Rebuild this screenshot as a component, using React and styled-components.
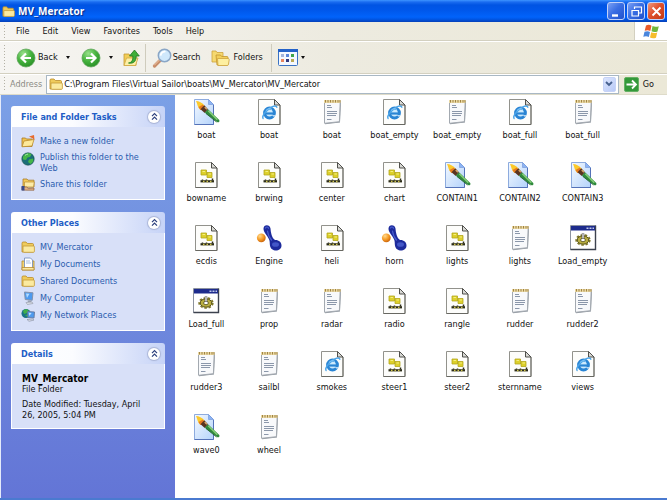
import React from "react";
import styled, { createGlobalStyle, css } from "styled-components";

const uiFont = `"DejaVu Sans Condensed", "DejaVu Sans", sans-serif`;

const GlobalStyle = createGlobalStyle`
  * { box-sizing: border-box; }
  html, body { margin: 0; padding: 0; }
  body {
    font-family: ${uiFont};
    font-size: 9px;
    line-height: 11px;
    color: #111;
    background: #fff;
  }
  button, input { font: inherit; color: inherit; }
`;

const Window = styled.div`
  display: flex;
  flex-direction: column;
  min-height: 100vh;
  border-bottom: 2px solid #4a7ad0;
  background: #fff;
`;

const TitleBar = styled.header`
  display: flex;
  align-items: center;
  gap: 3px;
  height: 22px;
  padding: 0 2px;
  background: linear-gradient(#3d95ff 0, #1a6cf0 2px, #0054e3 5px, #0057ea 10px, #0163fb 17px, #0058e8 19px, #0640b8 22px);
`;

const Title = styled.h1`
  flex: 1;
  margin: 0;
  font-family: "Open Sans", sans-serif;
  font-size: 10px;
  font-weight: 700;
  line-height: 20px;
  color: #fff;
  text-shadow: 1px 1px 1px #0a2a80;
`;

const WindowButtons = styled.div`
  display: flex;
  gap: 2px;
`;

const WindowButton = styled.button`
  width: 18px;
  height: 18px;
  padding: 0;
  border: 1px solid #c3d2f8;
  border-radius: 3px;
  display: grid;
  place-items: center;
  background: ${(p) =>
    p.$close
      ? "linear-gradient(135deg, #ee9a80, #e0502c 45%, #c23a14)"
      : "linear-gradient(135deg, #7ba0f4, #3b6fe4 45%, #1f51cc)"};
`;

const Bar = styled.div`
  display: flex;
  align-items: center;
  background: linear-gradient(90deg, #f6f5f2, #edebe0 50%, #ebe8d7);
`;

const MenuBar = styled(Bar)`
  height: 19px;
  padding-left: 4px;
  border-bottom: 1px solid #d3d0c0;
`;

const ToolBar = styled(Bar)`
  height: 33px;
  padding-left: 4px;
  border-top: 1px solid #fff;
  border-bottom: 1px solid #d3d0c0;
`;

const AddressBar = styled(Bar)`
  height: 21px;
  padding: 0 13px 1px 4px;
  border-top: 1px solid #fff;
  border-bottom: 1px solid #dedbc9;
`;

const Grip = styled.span`
  width: 1px;
  height: ${(p) => p.$height}px;
  background: repeating-linear-gradient(#b3b1a5 0 1px, transparent 1px 3px);
`;

const Menus = styled.nav`
  flex: 1;
  display: flex;
  gap: 13px;
  padding-left: 11px;
`;

const MenuButton = styled.button`
  padding: 0;
  border: 0;
  background: none;
`;

const LogoBox = styled.div`
  display: grid;
  place-items: center;
  width: 33px;
  height: 18px;
  border-left: 1px solid #d3d0c0;
  background: #fff;
`;

const ToolButton = styled.button`
  display: flex;
  align-items: center;
  gap: ${(p) => p.$gap || 3}px;
  margin-left: ${(p) => p.$space || 0}px;
  padding: 0;
  border: 0;
  background: none;
`;

const Caret = styled.span`
  border: 2px solid transparent;
  border-top: 3px solid #111;
  border-bottom: 0;
`;

const Divider = styled.span`
  width: 1px;
  height: 28px;
  margin-left: ${(p) => p.$space}px;
  background: #cfccbd;
`;

const AddressLabel = styled.label`
  margin: 0 4px 0 5px;
  color: #8b8a84;
`;

const AddressField = styled.div`
  flex: 1;
  display: flex;
  align-items: center;
  height: 19px;
  padding: 0 2px;
  border: 1px solid #a9b8c4;
  background: #fff;
`;

const AddressInput = styled.input`
  flex: 1;
  min-width: 0;
  padding: 0 0 0 1px;
  border: 0;
  outline: 0;
  background: none;
`;

const DropButton = styled.button`
  display: grid;
  place-items: center;
  width: 13px;
  height: 15px;
  padding: 0;
  border: 1px solid #c6d3f7;
  border-radius: 2px;
  background: linear-gradient(135deg, #dbe5fe, #b9caf7);
`;

const Content = styled.div`
  flex: 1;
  display: flex;
`;

const Sidebar = styled.aside`
  width: 175px;
  flex: none;
  display: flex;
  flex-direction: column;
  gap: 12px;
  padding: 11px 10px;
  border-left: 1px solid #e4ebfa;
  background: linear-gradient(#7ba0e6, #6375d6);
`;

const Panel = styled.section`
  color: #2a5cae;
`;

const PanelHeader = styled.div`
  display: flex;
  align-items: center;
  justify-content: space-between;
  height: 21px;
  padding: 0 5px 0 10px;
  border-radius: 3px 3px 0 0;
  background: linear-gradient(90deg, #fff 0, #fbfcff 40%, #c6d3f7);
`;

const PanelTitle = styled.h2`
  margin: 0;
  padding-top: 2px;
  font-size: 9px;
  line-height: 13px;
  font-weight: 700;
  color: #215dc6;
`;

const CollapseButton = styled.button`
  display: grid;
  place-items: center;
  width: 12px;
  height: 12px;
  padding: 0;
  border: 0;
  border-radius: 50%;
  background: #fff;
  box-shadow: 0 0 1px 1px #a9b4d6;
`;

const panelBody = css`
  margin: 0;
  border: 1px solid #fff;
  border-top: 0;
  background: #d8e0f8;
`;

const LinkList = styled.ul`
  ${panelBody}
  display: flex;
  flex-direction: column;
  gap: 3px;
  padding: 7px 10px 8px 9px;
  list-style: none;
`;

const PanelLink = styled.a`
  display: flex;
  align-items: center;
  gap: 5px;
  min-height: 14px;
  color: inherit;
  text-decoration: none;
`;

const WrappedLink = styled(PanelLink)`
  align-items: flex-start;
  padding-top: 1px;
`;

const LinkText = styled.span`
  flex: 1;
`;

const DetailsBody = styled.div`
  ${panelBody}
  display: flex;
  flex-direction: column;
  gap: 4px;
  padding: 9px 10px 7px 10px;
  color: #111;
`;

const DetailText = styled.p`
  margin: 0;
`;

const DetailName = styled.strong`
  display: block;
  font-size: 10px;
  color: #000;
`;

const FileGrid = styled.main`
  flex: 1;
  display: grid;
  grid-template-columns: repeat(auto-fill, minmax(62px, 1fr));
  grid-auto-rows: 63px;
  align-content: start;
  padding: 3px 53px 18px 0;
`;

const FileItem = styled.button`
  display: flex;
  flex-direction: column;
  align-items: center;
  gap: 4px;
  padding: 0;
  border: 0;
  background: none;
`;

const Icon = styled.svg`
  display: block;
  flex: none;
`;

/* ---------- file icons (28 x 28) ---------- */

const Page = () => (
  <>
    <path d="M3.500 1.500h16l5.500 5.500v19.500h-21.500z" fill="#fdfdfb" stroke="#92928c" />
    <path d="M25 7v19.500H3.500" fill="none" stroke="#686862" />
    <path d="M19.500 1.500v5.500h5.500z" fill="#d8d8d4" stroke="#50504c" strokeLinejoin="round" />
  </>
);

const PaintIcon = () => (
  <Icon width="28" height="28" viewBox="0 0 28 28">
    <defs>
      <linearGradient id="paintPage" x1="0" y1="0" x2="1" y2="1">
        <stop offset="0" stopColor="#f4f9ff" />
        <stop offset="1" stopColor="#b4d3fb" />
      </linearGradient>
    </defs>
    <path d="M2.500 1.500h14l5 5v20h-19z" fill="url(#paintPage)" stroke="#8dabde" />
    <path d="M2.500 26.500h19V7" fill="none" stroke="#5472b8" />
    <path d="M16.500 1.500v5h5z" fill="#8db4f4" stroke="#6f94d8" strokeWidth=".6" />
    <path d="M4 3c3 0 6 1.500 8.500 4.500l-4 4.500C5.500 9.500 5.500 6 4 3z" fill="#fbc92c" />
    <path d="M6.500 9l2 3 3.800-2.500L11 6.500z" fill="#e67a20" />
    <path d="M12.300 7.300l3.700 4-3.200 3.700-4.300-3.800z" fill="#5a3420" />
    <path d="M12.800 9l2 2.300" stroke="#d8a868" strokeWidth="1.400" />
    <path d="M16 11.300l11 10.500c1.200 1.500-.3 3.200-2 2.200L12.800 14.800z" fill="#2f8a3c" />
    <path d="M16.300 12.800l9 9" stroke="#84cc78" strokeWidth="1.600" />
    <path d="M14 15.500l10.500 8.500" stroke="#1c5a2a" strokeWidth=".8" />
  </Icon>
);

const WebIcon = () => (
  <Icon width="28" height="28" viewBox="0 0 28 28">
    <Page />
    <circle cx="14.500" cy="15" r="4.900" fill="#cdeafd" stroke="#2a85d4" strokeWidth="3" />
    <path d="M10.500 15.500h9" stroke="#2a85d4" strokeWidth="2.200" />
    <path d="M16.500 17.200h4l-1.500 1.600z" fill="#e6f4fe" />
    <path d="M8.500 20.800c-2.500-1.500 1.500-7.500 6.500-10.800 3-2 6.800-3 6.800-.3" fill="none" stroke="#4aa4e8" strokeWidth="1.500" />
    <path d="M10.800 12.700c1.500-2.200 4.500-2.500 6.200-1.200" fill="none" stroke="#8dccf8" strokeWidth="1" />
  </Icon>
);

const TextIcon = () => (
  <Icon width="28" height="28" viewBox="0 0 28 28">
    <path d="M7 4h16l-1 20.500-15 1.800z" fill="#8f969e" />
    <path d="M6.500 3.500h15.700l-.8 20.200-14.900 1.600z" fill="#f8f9fb" stroke="#a3a9b0" />
    <path d="M6 2h16.500v3H6z" fill="#ead9a4" />
    <path d="M7.500 2v2.500M10 2v2.500M12.500 2v2.500M15 2v2.500M17.500 2v2.500M20 2v2.500M22 2v2.500" stroke="#a08344" />
    <path d="M9 7.500h4M9 9.500h5M9 13.500h10M9 15.500h10M9 17.500h9M9 21.500h4.500" stroke="#8b97aa" />
  </Icon>
);

const ImageIcon = () => (
  <Icon width="28" height="28" viewBox="0 0 28 28">
    <Page />
    <path d="M9 9h5.500v5H9zM15 11.500h5v5h-5z" fill="#ddd02a" stroke="#b3a61c" strokeWidth=".8" />
    <path d="M10.500 10.500h2.500M16.500 13h2.500" stroke="#f4ee80" />
    <path d="M8.500 20.300h13.500" stroke="#2c2c18" strokeWidth="2.200" />
    <path d="M10.500 18.500v1M14.500 18.500v1M20.500 17.500v2" stroke="#2c2c18" strokeWidth="1.500" />
    <path d="M11 20.500h1.500M14.500 20.500h1.500M18 20.500h1.500" stroke="#cfc44c" strokeWidth="1.400" />
  </Icon>
);

const SoundIcon = () => (
  <Icon width="28" height="28" viewBox="0 0 28 28">
    <defs>
      <radialGradient id="soundOrange" cx=".35" cy=".3" r=".7">
        <stop offset="0" stopColor="#ffd98c" />
        <stop offset=".6" stopColor="#f59a24" />
        <stop offset="1" stopColor="#cf6a10" />
      </radialGradient>
    </defs>
    <path d="M8.500 4.500c0-4.500 6.500-4.500 7 0 .3 4 1.300 9.500 4.500 11.500 3.500-.3 6.500 2 6.500 5.500 0 6.500-10.500 6.800-11.500.3-.4-2.500 0-4.500-1-6.500C12 11 8.500 8.500 8.500 4.500z" fill="#1d2b9c" />
    <path d="M10.500 4c.8-1.500 2.500-1.200 3 .2M12.500 7c.5 3.500 2 7 4 9" fill="none" stroke="#4a5fd0" strokeWidth="1.200" strokeLinecap="round" />
    <ellipse cx="20.500" cy="20.500" rx="3.500" ry="2.300" fill="#4357c8" />
    <circle cx="6.300" cy="13.800" r="4.400" fill="url(#soundOrange)" />
  </Icon>
);

const ProgramIcon = () => (
  <Icon width="28" height="28" viewBox="0 0 28 28">
    <path d="M1.500 1.500h25v24h-25z" fill="#fff" stroke="#8d93a0" />
    <path d="M26.500 1.500v24h-25" fill="none" stroke="#3c424e" strokeWidth="1.400" />
    <path d="M2 2h24v4.500H2z" fill="#1d2b8c" />
    <path d="M17.500 4.300h2M20.500 4.300h2M23.500 4.300h1.500" stroke="#c0c8ec" strokeWidth="1.600" />
    <ellipse cx="14" cy="16" rx="5.800" ry="4.200" fill="#b9ae40" stroke="#4e4914" />
    <ellipse cx="14" cy="16" rx="6.800" ry="5" fill="none" stroke="#7d7526" strokeWidth="1.700" strokeDasharray="2.400 1.800" />
    <ellipse cx="14" cy="16" rx="2.400" ry="1.700" fill="#fff" stroke="#4e4914" strokeWidth=".8" />
    <path d="M14 9.500v5.500" stroke="#4a4a4a" strokeWidth="2.600" />
    <path d="M14 10v4.500" stroke="#fff" strokeWidth="1.200" />
  </Icon>
);

const fileIcons = {
  paint: PaintIcon,
  web: WebIcon,
  text: TextIcon,
  image: ImageIcon,
  sound: SoundIcon,
  program: ProgramIcon,
};

/* ---------- small icons ---------- */

const FolderIcon = ({ size = 14 }) => (
  <Icon width={size} height={size} viewBox="0 0 14 14">
    <path d="M1 3.200c0-.7.400-1.200 1-1.200h3l1.300 1.500h5.200c.6 0 1 .400 1 1v7.500H1z" fill="#efcb5c" stroke="#b98c2a" strokeWidth=".8" />
    <path d="M2 6h10.500c.6 0 .9.300.9.800v4.600c0 .5-.3.900-.9.900H3c-.6 0-1-.4-1-1z" fill="#fbeaa0" stroke="#c49a38" strokeWidth=".8" />
  </Icon>
);

const NewFolderIcon = () => (
  <Icon width="14" height="14" viewBox="0 0 14 14">
    <path d="M1 4h3.500l1 1H11v7.500H1z" fill="#f0c350" stroke="#a97a22" strokeWidth=".8" />
    <path d="M3 7l10-1.500-2 6.500-10 .8z" fill="#fde99a" stroke="#b98a2c" strokeWidth=".8" />
    <path d="M8 2.500l5-1.500.5 5-2.500-2z" fill="#e86a2c" />
  </Icon>
);

const GlobeIcon = () => (
  <Icon width="14" height="14" viewBox="0 0 14 14">
    <circle cx="7" cy="7" r="6.200" fill="#1b6e78" stroke="#195048" strokeWidth=".6" />
    <path d="M3 3c2-2 6-2.200 7.500-.5L9 5 6.500 5.500 5 8 2 7.500C1.500 6 2 4 3 3zM8 7.500l4-1c.8 2-.3 4.500-2.500 5.500L7 10z" fill="#45b649" />
    <path d="M4 3.500c1-1 2-1.300 3-1.300" stroke="#b4ecb0" fill="none" />
  </Icon>
);

const ShareIcon = () => (
  <Icon width="14" height="14" viewBox="0 0 14 14">
    <path d="M2 2h4l1 1.200h6V10H2z" fill="#f3ca58" stroke="#a97c28" strokeWidth=".8" />
    <path d="M3.500 5h9.800l-.8 5h-9z" fill="#fdeba6" stroke="#b98c30" strokeWidth=".7" />
    <path d="M1 10h4.500l2 1.500 5.500-.5v2.200H6L1 13z" fill="#e3b184" stroke="#7d4f2b" strokeWidth=".6" />
    <path d="M.5 9h3v4.500h-3z" fill="#37498c" />
  </Icon>
);

const DocumentsIcon = () => (
  <Icon width="14" height="14" viewBox="0 0 14 14">
    <path d="M1 4h12v9H1z" fill="#f4d471" stroke="#b08a30" strokeWidth=".8" />
    <path d="M3.500 1h6L11.500 3v8.500h-8z" fill="#fff" stroke="#6c88b8" strokeWidth=".8" />
    <path d="M5 4h4M5 6h5" stroke="#8faede" strokeWidth=".8" />
    <path d="M1 10.500h12V13H1z" fill="#fbe9a2" stroke="#b98c30" strokeWidth=".8" />
  </Icon>
);

const ComputerIcon = () => (
  <Icon width="14" height="14" viewBox="0 0 14 14">
    <path d="M3.500 1l8.500.8-.8 7.500-7-.8z" fill="#4c9af0" stroke="#8493ad" strokeWidth="1" />
    <path d="M5 2.500l3.500.3L6 7z" fill="#b4dcff" />
    <path d="M7 9.500h3l.5 1.500-4 .2z" fill="#9aa3b4" />
    <path d="M5 11.500l6-.5 1 1.500-5.500 1z" fill="#dfe2ea" stroke="#8d93a3" strokeWidth=".6" />
  </Icon>
);

const NetworkIcon = () => (
  <Icon width="14" height="14" viewBox="0 0 14 14">
    <circle cx="5" cy="5.500" r="4.500" fill="#1a7387" />
    <path d="M2 3c1.500-2 4-2 5.500-1L6 5 3 6zM4 7l3-.500L6.500 9z" fill="#42b04a" />
    <path d="M6.500 3.500l7 .500-.5 6-6-.5z" fill="#4e9aee" stroke="#66789c" strokeWidth=".9" />
    <path d="M7.800 4.800l2.800.2-2.300 3z" fill="#c2e2ff" />
    <path d="M6 11.500l5.500-.5 1.500 1-5 1.300z" fill="#e0e3ec" stroke="#7f889c" strokeWidth=".6" />
  </Icon>
);

const ArrowBall = ({ back }) => (
  <Icon width="20" height="20" viewBox="0 0 20 20">
    <defs>
      <radialGradient id={back ? "ballBack" : "ballForward"} cx=".35" cy=".25" r=".85">
        <stop offset="0" stopColor="#98e08a" />
        <stop offset=".5" stopColor="#46b33e" />
        <stop offset="1" stopColor="#258a24" />
      </radialGradient>
    </defs>
    <circle cx="10" cy="10" r="9" fill={`url(#${back ? "ballBack" : "ballForward"})`} stroke="#5fa65a" strokeWidth=".8" />
    <path
      d={back ? "M15 10H6M10 5.500L5.500 10l4.500 4.500" : "M5 10h9M10 5.500l4.500 4.500-4.500 4.500"}
      fill="none"
      stroke="#fff"
      strokeWidth="2.200"
    />
  </Icon>
);

const UpIcon = () => (
  <Icon width="17" height="18" viewBox="0 0 17 18">
    <path d="M1 5h5l1.500 2H13v9.500H1z" fill="#f2cd58" stroke="#c49a34" strokeWidth=".8" />
    <path d="M3.500 9H15l-2.500 7.500H1z" fill="#fdf0a6" stroke="#d0a844" strokeWidth=".8" />
    <path d="M5.500 14c3.500-.5 4.500-3 4.300-7H6.500L11.500 1l4.800 6h-3.200c.2 5-2.100 8-7.600 7z" fill="#3fae38" stroke="#1e7a22" strokeWidth=".8" />
  </Icon>
);

const SearchIcon = () => (
  <Icon width="20" height="20" viewBox="0 0 20 20">
    <path d="M8.500 12L2.500 18" stroke="#c88d6a" strokeWidth="3.200" strokeLinecap="round" />
    <path d="M8 11.500L2.500 17" stroke="#f0c9a8" strokeWidth="1" strokeLinecap="round" />
    <circle cx="12.500" cy="7.500" r="6.200" fill="#cfe8fb" stroke="#8aa6c6" strokeWidth="1.500" />
    <path d="M8.800 7c.4-2.200 2-3.400 4-3.400" stroke="#fff" strokeWidth="1.700" fill="none" strokeLinecap="round" />
  </Icon>
);

const FoldersIcon = () => (
  <Icon width="19" height="18" viewBox="0 0 19 18">
    <path d="M1 2h4l1 1.500h6V13H1z" fill="#f6d970" stroke="#cda23c" strokeWidth=".8" />
    <path d="M5 6h4.500l1.200 1.500H16c.6 0 1 .4 1 1V16H6z" fill="#f3cf5a" stroke="#c2952f" strokeWidth=".8" />
    <path d="M6.500 9.500H17c.8 0 1.300.5 1.200 1.200l-.7 4.600c-.1.800-.6 1.200-1.300 1.200H7z" fill="#fdefa0" stroke="#cda23c" strokeWidth=".8" />
  </Icon>
);

const ViewsIcon = () => (
  <Icon width="20" height="17" viewBox="0 0 20 17">
    <rect x=".5" y=".5" width="19" height="16" rx="1" fill="#f4f8ff" stroke="#3a73c4" />
    <path d="M0 0h20v3H0z" fill="#2462c8" />
    <path d="M3 5h3v3H3z" fill="#a3b4da" />
    <path d="M8 5h3v3H8z" fill="#5b86d8" />
    <path d="M13 5h3v3h-3z" fill="#3fa54a" />
    <path d="M3 10h3v3H3z" fill="#ea865e" />
    <path d="M8 10h3v3H8z" fill="#34387c" />
    <path d="M13 10h3v3h-3z" fill="#bcaa54" />
  </Icon>
);

const GoIcon = () => (
  <Icon width="15" height="15" viewBox="0 0 15 15">
    <rect x=".5" y=".5" width="14" height="14" rx="1.500" fill="#33993a" stroke="#65b064" />
    <path d="M2.500 7.500H12M8 3.500l4 4-4 4" fill="none" stroke="#fff" strokeWidth="1.800" />
  </Icon>
);

const FlagIcon = () => (
  <Icon width="17" height="15" viewBox="0 0 17 15">
    <path d="M3 1.500c2-1 4-.8 5.500.2L7.300 7C5.500 6 3.700 6 1.700 6.800z" fill="#ea5a2a" />
    <path d="M9.500 2c2 1 4 1 6.300.2L14.500 7.500c-2 .8-4.200.8-6-.2z" fill="#6fb83c" />
    <path d="M1.500 7.800c2-.8 3.800-.8 5.500.2L5.800 13c-1.800-1-3.500-1-5.500-.2z" fill="#4a86dc" />
    <path d="M8.200 8.300c2 1 4 1 6 .2L13 13.700c-2 .8-4.200.8-6-.2z" fill="#f6bd2c" />
  </Icon>
);

const ChevronsIcon = () => (
  <Icon width="9" height="9" viewBox="0 0 9 9">
    <path d="M2 4.200l2.500-2.500L7 4.200M2 7.700l2.500-2.500L7 7.700" fill="none" stroke="#2b3f7c" strokeWidth="1.200" />
  </Icon>
);

const DropIcon = () => (
  <Icon width="8" height="6" viewBox="0 0 8 6">
    <path d="M1 1l3 3 3-3" fill="none" stroke="#47618f" strokeWidth="1.900" />
  </Icon>
);

const windowGlyphs = {
  Minimize: <path d="M3 11.500h6" stroke="#fff" strokeWidth="2.400" />,
  Restore: (
    <>
      <path d="M5.500 5V3h7v6H10" fill="none" stroke="#fff" strokeWidth="1.200" />
      <path d="M3 6.500h6.500V12H3z" fill="none" stroke="#fff" strokeWidth="1.200" />
    </>
  ),
  Close: <path d="M3.500 3.500l8 8M11.500 3.500l-8 8" stroke="#fff" strokeWidth="1.900" />,
};

/* ---------- data ---------- */

const menus = ["File", "Edit", "View", "Favorites", "Tools", "Help"];

const tasks = [
  { text: "Make a new folder", icon: NewFolderIcon },
  { text: "Publish this folder to the Web", icon: GlobeIcon, wrapped: true },
  { text: "Share this folder", icon: ShareIcon },
];

const places = [
  { text: "MV_Mercator", icon: FolderIcon },
  { text: "My Documents", icon: DocumentsIcon },
  { text: "Shared Documents", icon: FolderIcon },
  { text: "My Computer", icon: ComputerIcon },
  { text: "My Network Places", icon: NetworkIcon },
];

const files = [
  ["boat", "paint"], ["boat", "web"], ["boat", "text"], ["boat_empty", "web"],
  ["boat_empty", "text"], ["boat_full", "web"], ["boat_full", "text"],
  ["bowname", "image"], ["brwing", "image"], ["center", "image"], ["chart", "image"],
  ["CONTAIN1", "paint"], ["CONTAIN2", "paint"], ["CONTAIN3", "paint"],
  ["ecdis", "image"], ["Engine", "sound"], ["heli", "image"], ["horn", "sound"],
  ["lights", "image"], ["lights", "text"], ["Load_empty", "program"],
  ["Load_full", "program"], ["prop", "text"], ["radar", "text"], ["radio", "image"],
  ["rangle", "image"], ["rudder", "text"], ["rudder2", "text"],
  ["rudder3", "text"], ["sailbl", "text"], ["smokes", "web"], ["steer1", "image"],
  ["steer2", "image"], ["sternname", "image"], ["views", "web"],
  ["wave0", "paint"], ["wheel", "text"],
];

function SidePanel({ title, children }) {
  return (
    <Panel>
      <PanelHeader>
        <PanelTitle>{title}</PanelTitle>
        <CollapseButton aria-label={`Collapse ${title}`}>
          <ChevronsIcon />
        </CollapseButton>
      </PanelHeader>
      {children}
    </Panel>
  );
}

function Links({ items }) {
  return (
    <LinkList>
      {items.map(({ text, icon: Glyph, wrapped }) => {
        const Link = wrapped ? WrappedLink : PanelLink;
        return (
          <li key={text}>
            <Link href="#">
              <Glyph />
              <LinkText>{text}</LinkText>
            </Link>
          </li>
        );
      })}
    </LinkList>
  );
}

export default function App() {
  return (
    <Window>
      <GlobalStyle />
      <TitleBar>
        <FolderIcon size={13} />
        <Title>MV_Mercator</Title>
        <WindowButtons>
          {Object.entries(windowGlyphs).map(([name, glyph]) => (
            <WindowButton key={name} aria-label={name} $close={name === "Close"}>
              <Icon width="15" height="15" viewBox="0 0 15 15">{glyph}</Icon>
            </WindowButton>
          ))}
        </WindowButtons>
      </TitleBar>

      <MenuBar>
        <Grip $height={13} />
        <Menus>
          {menus.map((name) => (
            <MenuButton key={name}>{name}</MenuButton>
          ))}
        </Menus>
        <LogoBox><FlagIcon /></LogoBox>
      </MenuBar>

      <ToolBar>
        <Grip $height={26} />
        <ToolButton $space={11} $gap={2}><ArrowBall back />Back</ToolButton>
        <ToolButton $space={8} aria-label="Back history"><Caret /></ToolButton>
        <ToolButton $space={11} aria-label="Forward"><ArrowBall /></ToolButton>
        <ToolButton $space={8} aria-label="Forward history"><Caret /></ToolButton>
        <ToolButton $space={10} aria-label="Up"><UpIcon /></ToolButton>
        <Divider $space={5} />
        <ToolButton $space={6} $gap={1}><SearchIcon />Search</ToolButton>
        <ToolButton $space={11}><FoldersIcon />Folders</ToolButton>
        <Divider $space={8} />
        <ToolButton $space={6} aria-label="Views"><ViewsIcon /><Caret /></ToolButton>
      </ToolBar>

      <AddressBar>
        <Grip $height={15} />
        <AddressLabel htmlFor="address">Address</AddressLabel>
        <AddressField>
          <FolderIcon />
          <AddressInput
            id="address"
            defaultValue={"C:\\Program Files\\Virtual Sailor\\boats\\MV_Mercator\\MV_Mercator"}
          />
          <DropButton aria-label="Show address list"><DropIcon /></DropButton>
        </AddressField>
        <ToolButton $space={5} $gap={4}><GoIcon />Go</ToolButton>
      </AddressBar>

      <Content>
        <Sidebar>
          <SidePanel title="File and Folder Tasks"><Links items={tasks} /></SidePanel>
          <SidePanel title="Other Places"><Links items={places} /></SidePanel>
          <SidePanel title="Details">
            <DetailsBody>
              <DetailText><DetailName>MV_Mercator</DetailName>File Folder</DetailText>
              <DetailText>Date Modified: Tuesday, April 26, 2005, 5:04 PM</DetailText>
            </DetailsBody>
          </SidePanel>
        </Sidebar>
        <FileGrid>
          {files.map(([name, kind], i) => {
            const Glyph = fileIcons[kind];
            return (
              <FileItem key={i}>
                <Glyph />
                {name}
              </FileItem>
            );
          })}
        </FileGrid>
      </Content>
    </Window>
  );
}
